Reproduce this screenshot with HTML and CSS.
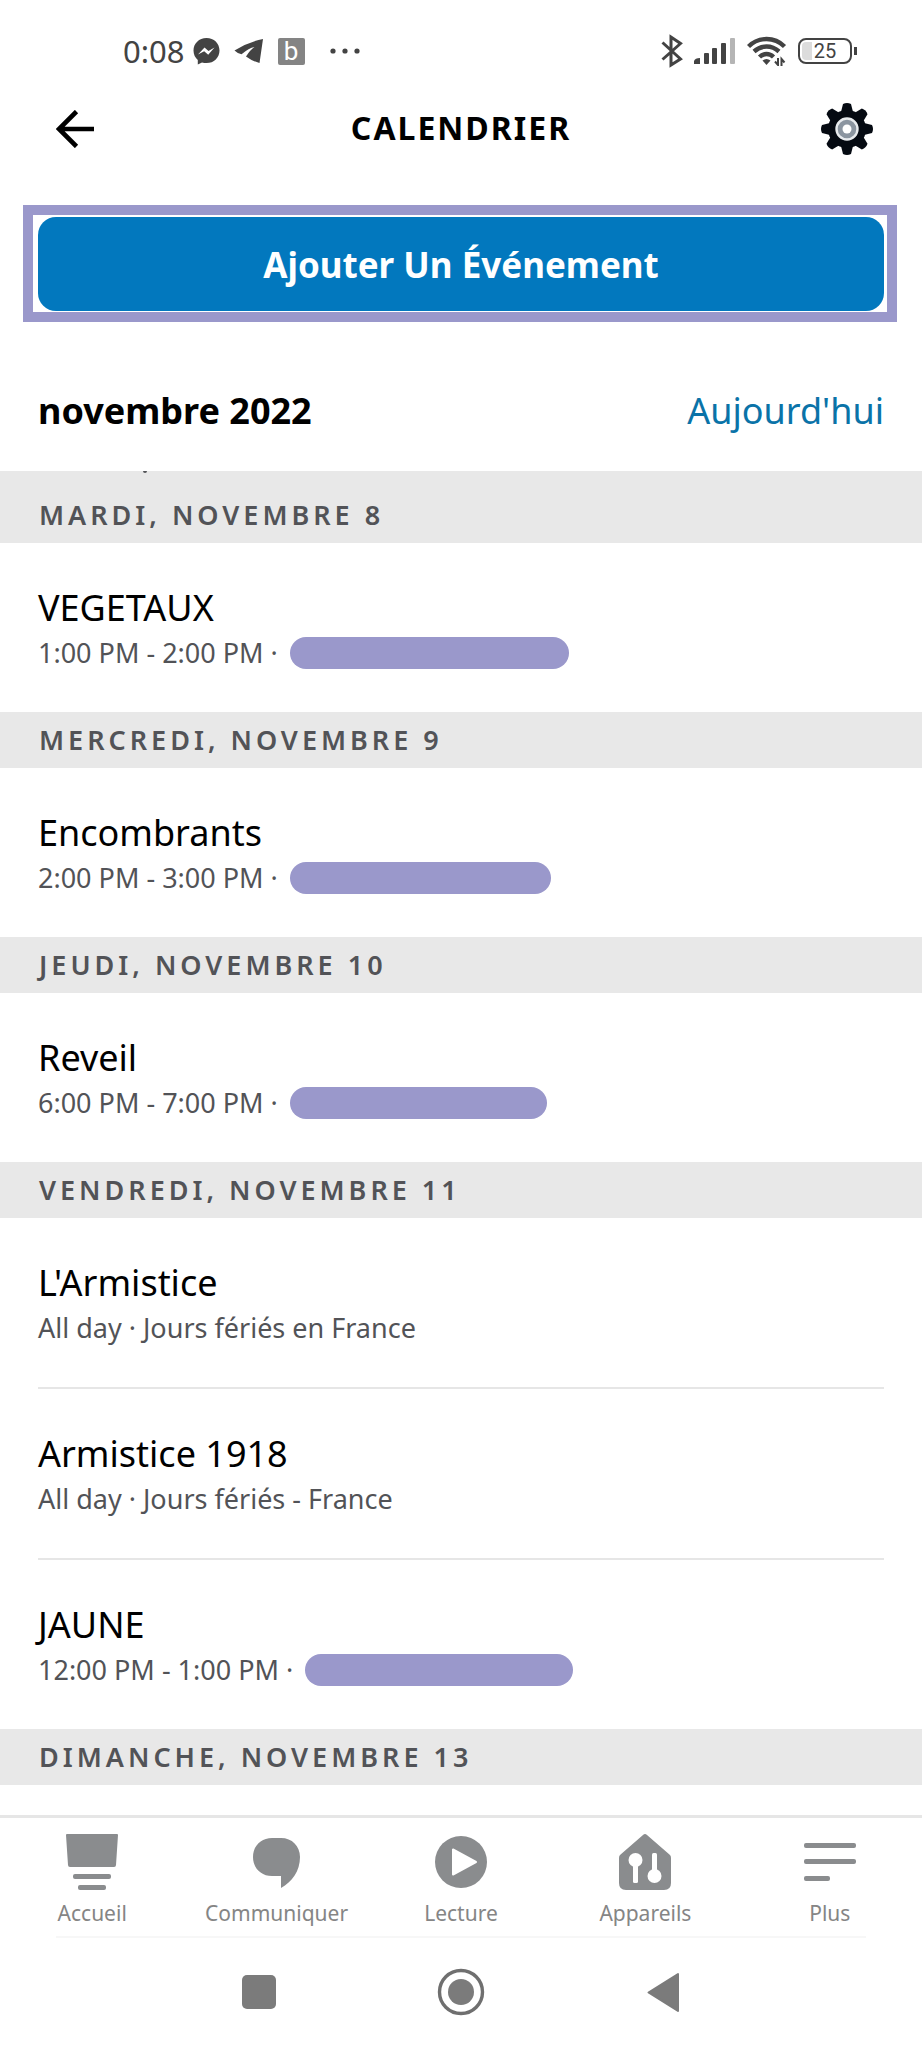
FILE: index.html
```
<!DOCTYPE html>
<html lang="fr">
<head>
	<meta charset="utf-8">
	<meta name="viewport" content="width=device-width, initial-scale=1">
	<title>Calendrier</title>
	<link rel="stylesheet" href="styles.css">
</head>
<body>
	<div class="status">
		<div class="status-left">
			<span class="clock">0:08</span>
			<svg width="27" height="28" viewBox="0 0 27 28">
				<path fill="#434343" d="M13.500 1C6 1 .5 6.500.5 13.500c0 4 1.700 7.200 4.300 9.500V27.500l4.200-2c1.400.4 2.900.6 4.500.6 7.500 0 13-5.500 13-12.600S21 1 13.500 1z"/>
				<path fill="#fff" d="M5 17.500l6.500-7 4 3.600 6-3.600-6.300 7.300-4-3.600z"/>
			</svg>
			<svg width="30" height="26" viewBox="0 0 30 26">
				<path fill="#434343" d="M29 1Q14 4 .5 12.500q3 3 7 3.800Q15 10 20.500 9 16 12 12 18.500 18 23 25.500 25z"/>
			</svg>
			<span class="app-b">b</span>
			<svg width="30" height="6" viewBox="0 0 30 6" fill="#434343">
				<circle cx="3" cy="3" r="2.600"/><circle cx="15" cy="3" r="2.600"/><circle cx="27" cy="3" r="2.600"/>
			</svg>
		</div>
		<div class="status-right">
			<svg width="22" height="34" viewBox="0 0 22 34" fill="none" stroke="#434343" stroke-width="3">
				<path d="M1.500 8.500L19.500 25 10 31V3l9.500 6.500L1.500 25.500"/>
			</svg>
			<svg width="42" height="26" viewBox="0 0 42 26" fill="#434343">
				<path d="M0 26v-3q1-3 6-3v6z"/>
				<rect x="10" y="15" width="5" height="11" rx="1"/>
				<rect x="18" y="10" width="5" height="16" rx="1"/>
				<rect x="27" y="5" width="5" height="21" rx="1"/>
				<rect x="36" y="0" width="5" height="26" rx="1" fill="#b5b5b5"/>
			</svg>
			<svg width="40" height="30" viewBox="0 0 40 30" fill="none" stroke="#434343" stroke-width="4.400">
				<path d="M1.500 10.500Q9 3 19.500 3T37.500 10.500"/>
				<path d="M7 15.500Q12.500 10.500 19.500 10.500T32 15.500"/>
				<path d="M12.500 21Q15.500 18 19.500 18T26.500 21"/>
				<path fill="#434343" stroke="none" d="M15.500 24.500q4-3 8 0L19.500 29z"/>
				<path stroke-width="2" d="M31 22v7l-3-3.500M34.500 30v-7l3 3.500"/>
			</svg>
			<div class="battery"><span>25</span></div>
		</div>
	</div>

	<header class="header">
		<button type="button" class="icon-btn" aria-label="Retour">
			<svg width="38" height="38" viewBox="0 0 38 38" fill="none" stroke="#000" stroke-width="4.600">
				<path d="M20.500 1.500L3 19l17.500 17.500M3 19h35"/>
			</svg>
		</button>
		<h1>CALENDRIER</h1>
		<button type="button" class="icon-btn" aria-label="Options">
			<svg width="52" height="52" viewBox="-26 -26 52 52">
				<g fill="#050a12">
					<circle r="19"/>
					<path d="M-6-17L-4-25q4-2 8 0L6-17V17L4 25q-4 2-8 0L-6 17z"/>
					<path transform="rotate(90)" d="M-6-17L-4-25q4-2 8 0L6-17V17L4 25q-4 2-8 0L-6 17z"/>
					<path transform="rotate(45)" d="M-6-17L-4-25q4-2 8 0L6-17V17L4 25q-4 2-8 0L-6 17z"/>
					<path transform="rotate(135)" d="M-6-17L-4-25q4-2 8 0L6-17V17L4 25q-4 2-8 0L-6 17z"/>
				</g>
				<circle r="10.500" fill="#8b95a0" stroke="#e8ebee" stroke-width="2.400"/>
				<circle r="4.500" fill="#fff"/>
			</svg>
		</button>
	</header>

	<div class="frame">
		<button type="button" class="add">Ajouter Un Événement</button>
	</div>

	<div class="month">
		<h2>novembre 2022</h2>
		<a href="#today">Aujourd'hui</a>
	</div>

	<main class="list">
		<h3 class="day first" id="today">MARDI, NOVEMBRE 8</h3>
		<div class="event">
			<p class="name">VEGETAUX</p>
			<p class="info">1:00 PM - 2:00 PM ·<span class="pill" style="width:279px"></span></p>
		</div>
		<h3 class="day">MERCREDI, NOVEMBRE 9</h3>
		<div class="event">
			<p class="name">Encombrants</p>
			<p class="info">2:00 PM - 3:00 PM ·<span class="pill" style="width:261px"></span></p>
		</div>
		<h3 class="day">JEUDI, NOVEMBRE 10</h3>
		<div class="event">
			<p class="name">Reveil</p>
			<p class="info">6:00 PM - 7:00 PM ·<span class="pill" style="width:257px"></span></p>
		</div>
		<h3 class="day">VENDREDI, NOVEMBRE 11</h3>
		<div class="event">
			<p class="name">L'Armistice</p>
			<p class="info">All day · Jours fériés en France</p>
		</div>
		<div class="event">
			<p class="name">Armistice 1918</p>
			<p class="info">All day · Jours fériés - France</p>
		</div>
		<div class="event">
			<p class="name">JAUNE</p>
			<p class="info">12:00 PM - 1:00 PM ·<span class="pill" style="width:268px"></span></p>
		</div>
		<h3 class="day">DIMANCHE, NOVEMBRE 13</h3>
	</main>

	<nav class="tabs">
		<a href="#home">
			<svg width="52" height="56" viewBox="0 0 52 56" fill="#8a8c8e">
				<path d="M1 0h50q1 0 1 1l-2 30q0 2-2 2H4q-2 0-2-2L0 1q0-1 1-1z"/>
				<rect x="7" y="40" width="38" height="5" rx="2"/>
				<rect x="12" y="51" width="28" height="5" rx="2"/>
			</svg>
			Accueil
		</a>
		<a href="#talk">
			<svg width="52" height="56" viewBox="0 0 52 56" fill="#8a8c8e">
				<path d="M21 4h9c11 0 19 8 19 19 0 14-8 25-19 31V42h-9C10 42 2 34 2 23S10 4 21 4z"/>
			</svg>
			Communiquer
		</a>
		<a href="#play">
			<svg width="52" height="56" viewBox="0 0 52 56">
				<circle cx="26" cy="28" r="26" fill="#8a8c8e"/>
				<path fill="#fff" stroke="#fff" stroke-width="2" stroke-linejoin="round" d="M18 15.500v25L41 28z"/>
			</svg>
			Lecture
		</a>
		<a href="#devices">
			<svg width="52" height="56" viewBox="0 0 52 56">
				<path fill="#8a8c8e" d="M24 1q2-2 4 0l23 20q1 1 1 3v25q0 7-7 7H7q-7 0-7-7V24q0-2 1-3z"/>
				<g fill="#fff">
					<circle cx="16.500" cy="26" r="7"/>
					<rect x="14" y="28" width="5" height="21" rx="1.500"/>
					<circle cx="35.500" cy="42" r="7"/>
					<rect x="33" y="19" width="5" height="21" rx="1.500"/>
				</g>
			</svg>
			Appareils
		</a>
		<a href="#more">
			<svg width="52" height="56" viewBox="0 0 52 56" fill="#8a8c8e">
				<rect y="9" width="52" height="5" rx="2"/>
				<rect y="25" width="52" height="5" rx="2"/>
				<rect y="42" width="26" height="5" rx="2"/>
			</svg>
			Plus
		</a>
	</nav>

	<div class="system">
		<button type="button" class="icon-btn" aria-label="Applications">
			<svg width="48" height="48" viewBox="0 0 48 48"><rect x="7" y="7" width="34" height="34" rx="5" fill="#7b7b7b"/></svg>
		</button>
		<button type="button" class="icon-btn" aria-label="Accueil du téléphone">
			<svg width="48" height="48" viewBox="0 0 48 48">
				<circle cx="24" cy="24" r="21.500" fill="none" stroke="#6f6f6f" stroke-width="3.400"/>
				<circle cx="24" cy="24" r="13" fill="#7b7b7b"/>
			</svg>
		</button>
		<button type="button" class="icon-btn" aria-label="Précédent">
			<svg width="48" height="48" viewBox="0 0 48 48">
				<path fill="#7b7b7b" stroke="#7b7b7b" stroke-width="2" stroke-linejoin="round" d="M9.500 24.500L39 6v37z"/>
			</svg>
		</button>
	</div>
</body>
</html>
```
FILE: styles.css
```
* {
	box-sizing: border-box;
}
body {
	margin: 0;
	min-height: 100vh;
	display: flex;
	flex-direction: column;
	background-color: #fff;
	color: #000;
	font-family: "Noto Sans", "Open Sans", sans-serif;
}
h1, h2, h3, p {
	margin: 0;
}
svg {
	display: block;
}
button {
	font-family: inherit;
	border: none;
	padding: 0;
	cursor: pointer;
}
a {
	text-decoration: none;
}
.icon-btn {
	background: none;
}

/* phone status bar */
.status {
	display: flex;
	justify-content: space-between;
	align-items: center;
	height: 102px;
	padding: 0 64px 0 123px;
	color: #434343;
}
.status-left, .status-right {
	display: flex;
	align-items: center;
}
.status-left {
	gap: 14px;
}
.status-right {
	gap: 11px;
}
.clock {
	font-size: 31px;
	margin-right: -6px;
}
.app-b {
	width: 27px;
	height: 27px;
	margin-right: 11px;
	border-radius: 2px;
	background-color: #848484;
	color: #fff;
	font: 26px/27px Roboto, sans-serif;
	text-align: center;
}
.battery {
	position: relative;
	width: 54px;
	height: 26px;
	margin-right: 6px;
	border: 2px solid #434343;
	border-radius: 8px;
	background: linear-gradient(90deg, #dcdcdc 12px, #fff 12px);
	background-clip: content-box;
	padding: 2px;
	font: 20px/18px Roboto, sans-serif;
	text-align: center;
}
.battery::after {
	content: "";
	position: absolute;
	top: 7px;
	right: -7px;
	width: 3px;
	height: 8px;
	background-color: #434343;
}

.header {
	display: grid;
	grid-template-columns: 1fr auto 1fr;
	align-items: center;
	height: 54px;
	padding: 0 49px;
}
.header .icon-btn:first-child {
	justify-self: start;
	margin-left: 7px;
}
.header .icon-btn:last-child {
	justify-self: end;
}
h1 {
	padding-bottom: 4px;
	font-size: 32px;
	letter-spacing: 2px;
}

.frame {
	margin: 49px 25px 0 23px;
	padding: 2px 3px 1px 5px;
	border: 10px solid #9a98cb;
}
.add {
	display: block;
	width: 100%;
	height: 94px;
	border-radius: 18px;
	background-color: #0278be;
	color: #fff;
	font-size: 35px;
	font-weight: bold;
}

.month {
	display: flex;
	justify-content: space-between;
	padding: 64px 38px 36px;
	font-size: 36px;
	line-height: 49px;
}
h2 {
	font-size: 36px;
}
.month a {
	color: #0a73a8;
}

.list {
	flex: 1;
}
.day {
	height: 56px;
	padding: 0 39px;
	background-color: #e8e8e8;
	color: #525357;
	font-size: 27px;
	font-weight: 600;
	line-height: 56px;
	letter-spacing: 4px;
}
.first {
	position: relative;
	height: 72px;
	padding-top: 16px;
}
/* tail of the heading that has scrolled away */
.first::before {
	content: "";
	position: absolute;
	top: 0;
	left: 143px;
	width: 4px;
	height: 2px;
	border-radius: 0 0 2px 2px;
	background-color: #525357;
}
.event {
	padding: 43px 0 39px;
	margin: 0 38px;
}
.event + .event {
	border-top: 2px solid #e6e6e6;
}
.name {
	font-size: 36px;
	line-height: 44px;
}
.info {
	display: flex;
	align-items: center;
	gap: 12px;
	margin-top: 3px;
	color: #525357;
	font-size: 27px;
	line-height: 40px;
}
.pill {
	height: 32px;
	border-radius: 16px;
	background-color: #9a98cb;
}

/* app tabs */
.tabs {
	display: grid;
	grid-template-columns: repeat(5, 1fr);
	padding: 16px 0 9px;
	border-top: 3px solid #e6e6e6;
}
.tabs a {
	display: flex;
	flex-direction: column;
	align-items: center;
	gap: 9px;
	color: #858585;
	font-size: 21px;
	line-height: 28px;
}

.system {
	display: flex;
	justify-content: center;
	align-items: center;
	gap: 154px;
	height: 112px;
}
.system::before {
	content: "";
	position: absolute;
	left: 56px;
	right: 56px;
	height: 2px;
	align-self: flex-start;
	background-color: #f7f7f7;
}
```
